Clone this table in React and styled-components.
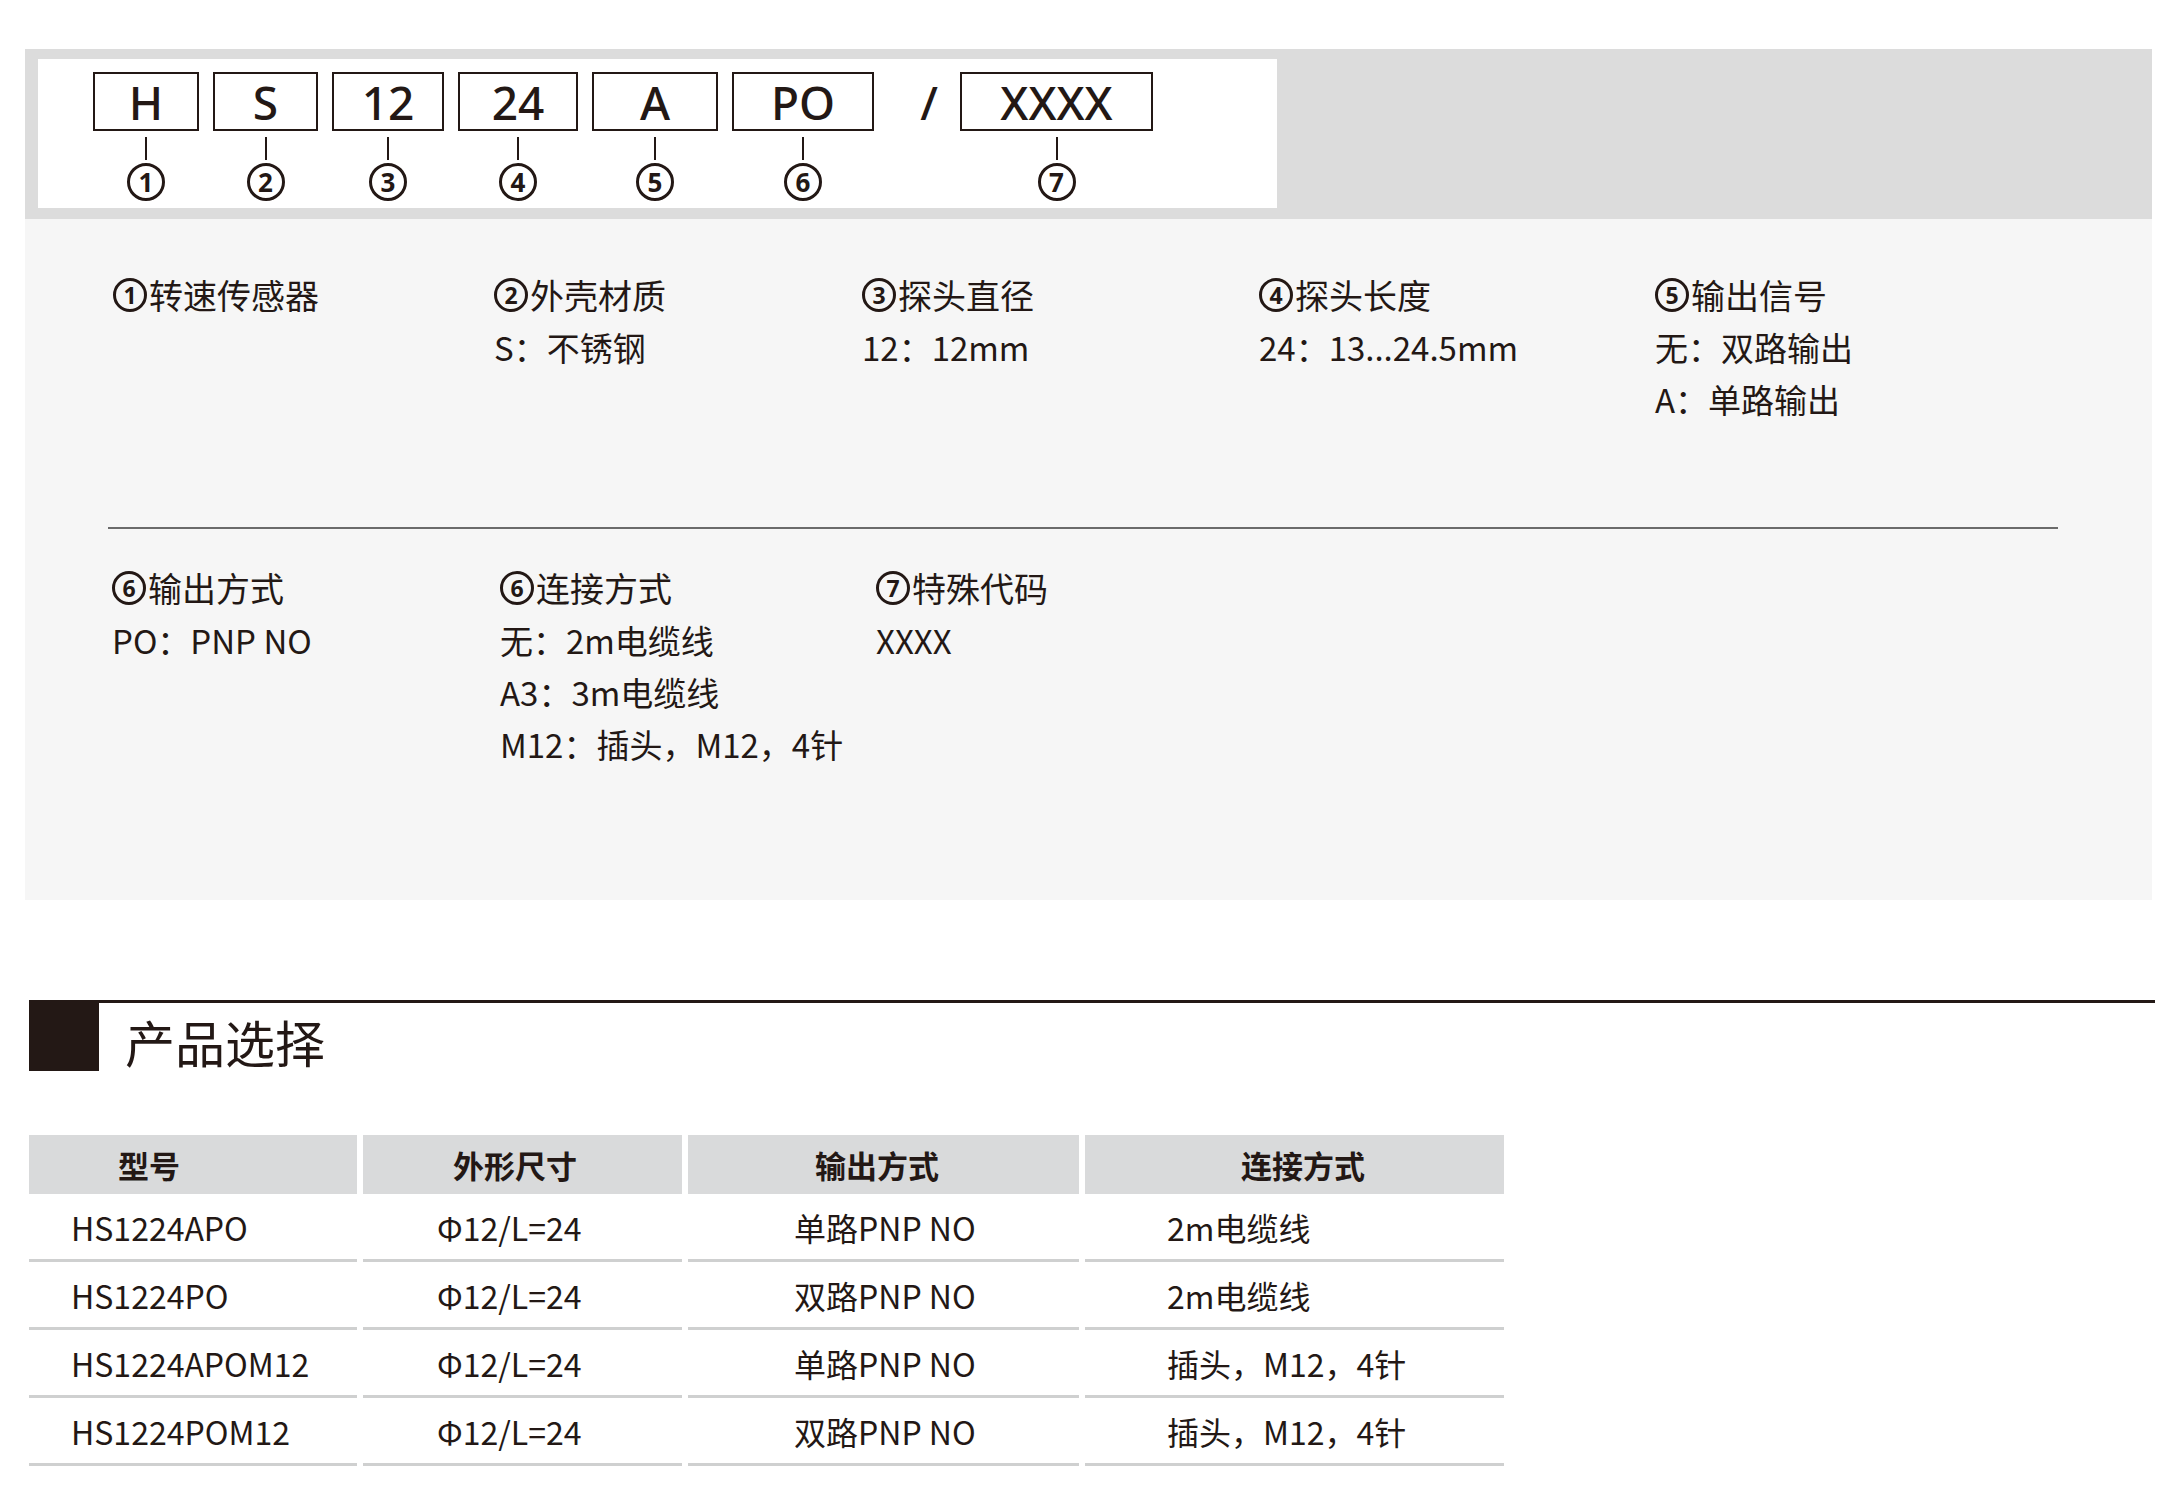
import React from "react";
import styled, { createGlobalStyle } from "styled-components";

const ink = "#231815";

const GlobalStyle = createGlobalStyle`
  body {
    margin: 0;
    background: #fff;
    color: ${ink};
    font-family: "Noto Sans CJK SC", "Noto Sans", sans-serif;
  }
`;

const Page = styled.div`
  width: 2170px;
  padding: 49px 0 40px;
`;

const SpecPanel = styled.div`
  margin-left: 25px;
  width: 2127px;
`;

const Band = styled.div`
  background: #dcdcdc;
  height: 170px;
  box-sizing: border-box;
  padding: 10px 0 0 13px;
`;

const CodeCard = styled.div`
  background: #fff;
  width: 1239px;
  height: 149px;
  box-sizing: border-box;
  padding: 13px 0 0 55px;
  display: flex;
  align-items: flex-start;
  gap: 14px;
`;

const CodeItem = styled.div`
  display: flex;
  flex-direction: column;
  align-items: center;
  width: ${({ $w }) => $w}px;
`;

const CodeBox = styled.div`
  width: 100%;
  height: 59px;
  box-sizing: border-box;
  border: 2px solid ${ink};
  display: flex;
  align-items: center;
  justify-content: center;
  font-family: "Noto Sans", sans-serif;
  font-size: 46px;
  font-weight: 500;
`;

const Slash = styled.div`
  width: 58px;
  height: 59px;
  display: flex;
  align-items: center;
  justify-content: flex-end;
  padding-right: 8px;
  box-sizing: border-box;
  font-family: "Noto Sans", sans-serif;
  font-size: 46px;
  font-weight: 500;
`;

const Tick = styled.div`
  width: 2px;
  height: 23px;
  margin-top: 6px;
  background: ${ink};
`;

const Circle = styled.span`
  display: inline-flex;
  align-items: center;
  justify-content: center;
  flex: none;
  box-sizing: border-box;
  width: ${({ $size }) => $size}px;
  height: ${({ $size }) => $size}px;
  border: 3px solid ${ink};
  border-radius: 50%;
  font-family: "Noto Sans", sans-serif;
  font-size: ${({ $size }) => Math.round($size * 0.68)}px;
  font-weight: 700;
  line-height: 1;
  margin-top: ${({ $mt }) => $mt || 0}px;
`;

const Details = styled.div`
  background: #f6f6f6;
  height: 681px;
  box-sizing: border-box;
  padding-top: 50px;
`;

const DescRow = styled.div`
  display: grid;
  grid-template-columns: ${({ $cols }) => $cols};
  padding-left: ${({ $pl }) => $pl}px;
  margin-top: ${({ $mt }) => $mt || 0}px;
`;

const DescItem = styled.div`
  display: flex;
  flex-direction: column;
`;

const DescTitle = styled.div`
  display: flex;
  align-items: center;
  gap: 2px;
  font-size: 34px;
  line-height: 52px;
  white-space: nowrap;
`;

const DescLine = styled.div`
  font-size: 33px;
  line-height: 52px;
  white-space: nowrap;
`;

const Divider = styled.div`
  margin: 102px 0 0 83px;
  width: 1950px;
  height: 2px;
  background: #6b6b6b;
`;

const SectionHead = styled.div`
  margin: 100px 0 0 29px;
  width: 2126px;
  border-top: 3px solid ${ink};
  display: flex;
  align-items: center;
`;

const Square = styled.div`
  width: 70px;
  height: 68px;
  background: ${ink};
`;

const SectionTitle = styled.h2`
  margin: 0 0 0 26px;
  padding-top: 8px;
  font-size: 50px;
  font-weight: 400;
  line-height: 1;
`;

const Table = styled.div`
  margin: 64px 0 0 29px;
  display: grid;
  grid-template-columns: 328px 319px 391px 419px;
  column-gap: 6px;
`;

const HeadCell = styled.div`
  background: #d9dadb;
  height: 59px;
  display: flex;
  align-items: center;
  padding-left: ${({ $pad }) => $pad}px;
  font-size: 31px;
  font-weight: 700;
`;

const Cell = styled.div`
  height: 68px;
  box-sizing: border-box;
  border-bottom: 3px solid #cfd0d0;
  display: flex;
  align-items: center;
  padding-left: ${({ $pad }) => $pad}px;
  font-size: 32px;
  white-space: nowrap;
`;

const codes = [
  { t: "H", w: 106, n: "1" },
  { t: "S", w: 105, n: "2" },
  { t: "12", w: 112, n: "3" },
  { t: "24", w: 120, n: "4" },
  { t: "A", w: 126, n: "5" },
  { t: "PO", w: 142, n: "6" },
  { slash: true },
  { t: "XXXX", w: 193, n: "7" },
];

const row1 = [
  { n: "1", title: "转速传感器", lines: [] },
  { n: "2", title: "外壳材质", lines: ["S：不锈钢"] },
  { n: "3", title: "探头直径", lines: ["12：12mm"] },
  { n: "4", title: "探头长度", lines: ["24：13...24.5mm"] },
  { n: "5", title: "输出信号", lines: ["无：双路输出", "A：单路输出"] },
];

const row2 = [
  { n: "6", title: "输出方式", lines: ["PO：PNP NO"] },
  { n: "6", title: "连接方式", lines: ["无：2m电缆线", "A3：3m电缆线", "M12：插头，M12，4针"] },
  { n: "7", title: "特殊代码", lines: ["XXXX"] },
];

const headPads = [89, 90, 127, 156];
const bodyPads = [42, 74, 106, 82];
const heads = ["型号", "外形尺寸", "输出方式", "连接方式"];
const products = [
  ["HS1224APO", "Φ12/L=24", "单路PNP NO", "2m电缆线"],
  ["HS1224PO", "Φ12/L=24", "双路PNP NO", "2m电缆线"],
  ["HS1224APOM12", "Φ12/L=24", "单路PNP NO", "插头，M12，4针"],
  ["HS1224POM12", "Φ12/L=24", "双路PNP NO", "插头，M12，4针"],
];

function Desc({ items, cols, pl, mt }) {
  return (
    <DescRow $cols={cols} $pl={pl} $mt={mt}>
      {items.map((d, i) => (
        <DescItem key={i}>
          <DescTitle>
            <Circle $size={34}>{d.n}</Circle>
            {d.title}
          </DescTitle>
          {d.lines.map((l) => (
            <DescLine key={l}>{l}</DescLine>
          ))}
        </DescItem>
      ))}
    </DescRow>
  );
}

export default function App() {
  return (
    <Page>
      <GlobalStyle />
      <SpecPanel>
        <Band>
          <CodeCard>
            {codes.map((c, i) =>
              c.slash ? (
                <Slash key={i}>/</Slash>
              ) : (
                <CodeItem key={i} $w={c.w}>
                  <CodeBox>{c.t}</CodeBox>
                  <Tick />
                  <Circle $size={38} $mt={3}>{c.n}</Circle>
                </CodeItem>
              )
            )}
          </CodeCard>
        </Band>
        <Details>
          <Desc items={row1} cols="381px 368px 397px 396px 1fr" pl={88} />
          <Divider />
          <Desc items={row2} cols="388px 376px 1fr" pl={87} mt={33} />
        </Details>
      </SpecPanel>

      <SectionHead>
        <Square />
        <SectionTitle>产品选择</SectionTitle>
      </SectionHead>

      <Table>
        {heads.map((h, i) => (
          <HeadCell key={h} $pad={headPads[i]}>{h}</HeadCell>
        ))}
        {products.map((row, r) =>
          row.map((v, i) => (
            <Cell key={`${r}-${i}`} $pad={bodyPads[i]}>{v}</Cell>
          ))
        )}
      </Table>
    </Page>
  );
}
